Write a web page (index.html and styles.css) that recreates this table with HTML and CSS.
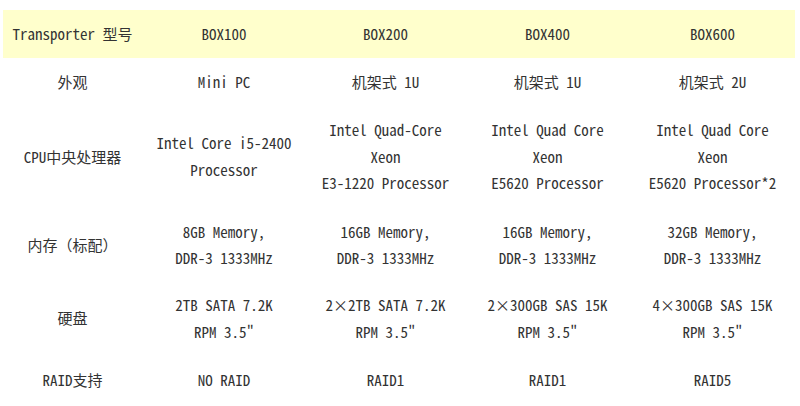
FILE: index.html
```html
<!DOCTYPE html>
<html lang="zh-CN">
<head>
<meta charset="utf-8">
<title>Transporter 型号</title>
<link rel="stylesheet" href="styles.css">
</head>
<body>
<div class="page">
<table class="spec">
  <colgroup>
    <col class="c0"><col class="c1"><col class="c2"><col class="c3"><col class="c4">
  </colgroup>
  <thead>
    <tr class="head">
      <th>Transporter 型号</th>
      <th>BOX100</th>
      <th>BOX200</th>
      <th>BOX400</th>
      <th>BOX600</th>
    </tr>
  </thead>
  <tbody>
    <tr>
      <td>外观</td>
      <td>Mini PC</td>
      <td>机架式 1U</td>
      <td>机架式 1U</td>
      <td>机架式 2U</td>
    </tr>
    <tr class="cpu">
      <td>CPU中央处理器</td>
      <td>Intel Core i5-2400<br>Processor</td>
      <td>Intel Quad-Core<br>Xeon<br>E3-1220 Processor</td>
      <td>Intel Quad Core<br>Xeon<br>E5620 Processor</td>
      <td>Intel Quad Core<br>Xeon<br>E5620 Processor*2</td>
    </tr>
    <tr class="mem">
      <td>内存（标配）</td>
      <td>8GB Memory,<br>DDR-3 1333MHz</td>
      <td>16GB Memory,<br>DDR-3 1333MHz</td>
      <td>16GB Memory,<br>DDR-3 1333MHz</td>
      <td>32GB Memory,<br>DDR-3 1333MHz</td>
    </tr>
    <tr class="disk">
      <td>硬盘</td>
      <td>2TB SATA 7.2K<br>RPM 3.5"</td>
      <td>2×2TB SATA 7.2K<br>RPM 3.5"</td>
      <td>2×300GB SAS 15K<br>RPM 3.5"</td>
      <td>4×300GB SAS 15K<br>RPM 3.5"</td>
    </tr>
    <tr class="raid">
      <td>RAID支持</td>
      <td>NO RAID</td>
      <td>RAID1</td>
      <td>RAID1</td>
      <td>RAID5</td>
    </tr>
  </tbody>
</table>
</div>
</body>
</html>
```

FILE: styles.css
```css
html, body {
  margin: 0;
  padding: 0;
  background: #ffffff;
}
.page {
  padding: 10px 5px 0 3px;
}
.spec {
  width: 792px;
  border-collapse: collapse;
  table-layout: fixed;
  font-family: "Noto Sans Mono CJK SC", "Noto Sans CJK SC", "DejaVu Sans Mono", monospace;
  font-size: 15px;
  line-height: 26.5px;
  color: #333333;
}
.c0 { width: 139px; }
.c1 { width: 164px; }
.c2 { width: 159px; }
.c3 { width: 165px; }
.c4 { width: 165px; }
.spec th, .spec td {
  padding: 10.75px 0;
  text-align: center;
  vertical-align: middle;
  font-weight: normal;
  white-space: nowrap;
}
.head {
  background: #ffffcc;
}
.cpu td {
  padding: 11px 0 11.5px;
}
.mem td {
  padding: 10.5px 0 11px;
}
.disk td {
  padding: 9.5px 0 10px;
}
.raid td {
  padding: 12px 0 14px;
}
```
